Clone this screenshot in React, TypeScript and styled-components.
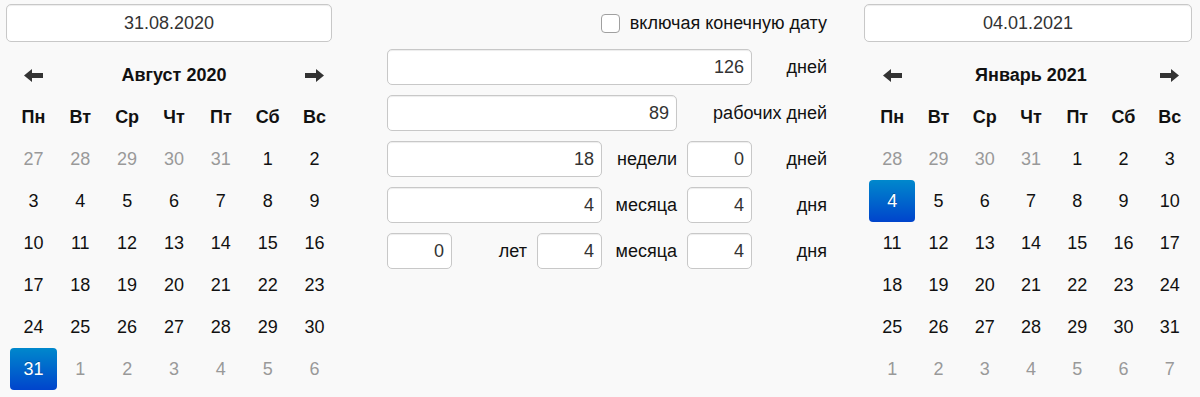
import React from "react";
import styled, { createGlobalStyle } from "styled-components";

const GlobalStyle = createGlobalStyle`
  body {
    margin: 0;
    background: #f9f9f9;
    font-family: "Liberation Sans", Arial, sans-serif;
    color: #111;
  }
`;

const Page = styled.div`
  display: flex;
  align-items: flex-start;
  padding: 4px 6px;
  width: 1188px;
  height: 389px;
  overflow: hidden;
`;

const Side = styled.div<{ $width: number; $gap: number }>`
  display: flex;
  flex-direction: column;
  width: ${(p) => p.$width}px;
  margin-right: ${(p) => p.$gap}px;
  flex-shrink: 0;
`;

const DateInput = styled.div<{ $width: number }>`
  box-sizing: border-box;
  width: ${(p) => p.$width}px;
  height: 38px;
  background: #fff;
  border: 1px solid #c8c8c8;
  border-radius: 5px;
  box-shadow: inset 0 1px 1px rgba(0, 0, 0, 0.075);
  display: flex;
  align-items: center;
  justify-content: center;
  font-size: 18px;
  color: #333;
`;

const Calendar = styled.div<{ $width: number; $offset: number }>`
  display: grid;
  grid-template-columns: repeat(7, 1fr);
  grid-auto-rows: 42px;
  width: ${(p) => p.$width}px;
  margin: 12px 0 0 ${(p) => p.$offset}px;
`;

const Cell = styled.div<{ $muted?: boolean; $active?: boolean; $bold?: boolean }>`
  display: flex;
  align-items: center;
  justify-content: center;
  font-size: 18px;
  font-weight: ${(p) => (p.$bold ? "bold" : "normal")};
  color: ${(p) => (p.$active ? "#fff" : p.$muted ? "#999" : "#111")};
  border-radius: 4px;
  background: ${(p) =>
    p.$active ? "linear-gradient(to bottom, #0088cc, #0044cc)" : "transparent"};
  text-shadow: ${(p) => (p.$active ? "0 -1px 0 rgba(0,0,0,0.25)" : "none")};
`;

const Title = styled(Cell)`
  grid-column: 2 / span 5;
  font-weight: bold;
  color: #111;
`;

const Middle = styled.div`
  width: 440px;
  margin-right: 37px;
  flex-shrink: 0;
`;

const CheckRow = styled.label`
  display: flex;
  align-items: center;
  justify-content: flex-end;
  gap: 10px;
  height: 38px;
  margin-bottom: 7px;
  font-size: 18px;
  color: #111;
`;

const Box = styled.span`
  box-sizing: border-box;
  width: 19px;
  height: 19px;
  border: 1px solid #a0a0a0;
  border-radius: 4px;
  background: #fff;
`;

const Grid = styled.div`
  display: grid;
  grid-template-columns: repeat(6, 65px);
  grid-auto-rows: 36px;
  column-gap: 10px;
  row-gap: 10px;
`;

const NumBox = styled.div<{ $span: number }>`
  grid-column: span ${(p) => p.$span};
  box-sizing: border-box;
  background: #fff;
  border: 1px solid #c8c8c8;
  border-radius: 5px;
  box-shadow: inset 0 1px 1px rgba(0, 0, 0, 0.075);
  display: flex;
  align-items: center;
  justify-content: flex-end;
  padding-right: 7px;
  font-size: 18px;
  color: #333;
`;

const Label = styled.div<{ $span?: number }>`
  grid-column: span ${(p) => p.$span || 1};
  display: flex;
  align-items: center;
  justify-content: flex-end;
  font-size: 18px;
  color: #111;
  white-space: nowrap;
`;

const Arrow = ({ dir }: { dir: "left" | "right" }) => (
  <svg width="19" height="13" viewBox="0 0 19 13" style={{ transform: dir === "right" ? "scaleX(-1)" : undefined }}>
    <path d="M0 6.5 L8 0 L8 4 L19 4 L19 9 L8 9 L8 13 Z" fill="#333" />
  </svg>
);

const weekdays = ["Пн", "Вт", "Ср", "Чт", "Пт", "Сб", "Вс"];

type Day = { n: number; muted?: boolean; active?: boolean };

function buildDays(prevStart: number, prevEnd: number, count: number, active: number): Day[] {
  const days: Day[] = [];
  for (let d = prevStart; d <= prevEnd; d++) days.push({ n: d, muted: true });
  for (let d = 1; d <= count; d++) days.push({ n: d, active: d === active });
  let next = 1;
  while (days.length < 42) days.push({ n: next++, muted: true });
  return days;
}

const MonthView = ({ title, days, width, offset }: { title: string; days: Day[]; width: number; offset: number }) => (
  <Calendar $width={width} $offset={offset}>
    <Cell><Arrow dir="left" /></Cell>
    <Title>{title}</Title>
    <Cell><Arrow dir="right" /></Cell>
    {weekdays.map((w) => (
      <Cell key={w} $bold>{w}</Cell>
    ))}
    {days.map((d, i) => (
      <Cell key={i} $muted={d.muted} $active={d.active}>{d.n}</Cell>
    ))}
  </Calendar>
);

export default function App() {
  const august = buildDays(27, 31, 31, 31);
  const january = buildDays(28, 31, 31, 4);

  return (
    <>
      <GlobalStyle />
      <Page>
        <Side $width={333} $gap={48}>
          <DateInput $width={326}>31.08.2020</DateInput>
          <MonthView title="Август 2020" days={august} width={328} offset={4} />
        </Side>
        <Middle>
          <CheckRow>
            <Box />
            включая конечную дату
          </CheckRow>
          <Grid>
            <NumBox $span={5}>126</NumBox>
            <Label>дней</Label>

            <NumBox $span={4}>89</NumBox>
            <Label $span={2}>рабочих дней</Label>

            <NumBox $span={3}>18</NumBox>
            <Label>недели</Label>
            <NumBox $span={1}>0</NumBox>
            <Label>дней</Label>

            <NumBox $span={3}>4</NumBox>
            <Label>месяца</Label>
            <NumBox $span={1}>4</NumBox>
            <Label>дня</Label>

            <NumBox $span={1}>0</NumBox>
            <Label>лет</Label>
            <NumBox $span={1}>4</NumBox>
            <Label>месяца</Label>
            <NumBox $span={1}>4</NumBox>
            <Label>дня</Label>
          </Grid>
        </Middle>
        <Side $width={330} $gap={0}>
          <DateInput $width={328}>04.01.2021</DateInput>
          <MonthView title="Январь 2021" days={january} width={324} offset={5} />
        </Side>
      </Page>
    </>
  );
}
